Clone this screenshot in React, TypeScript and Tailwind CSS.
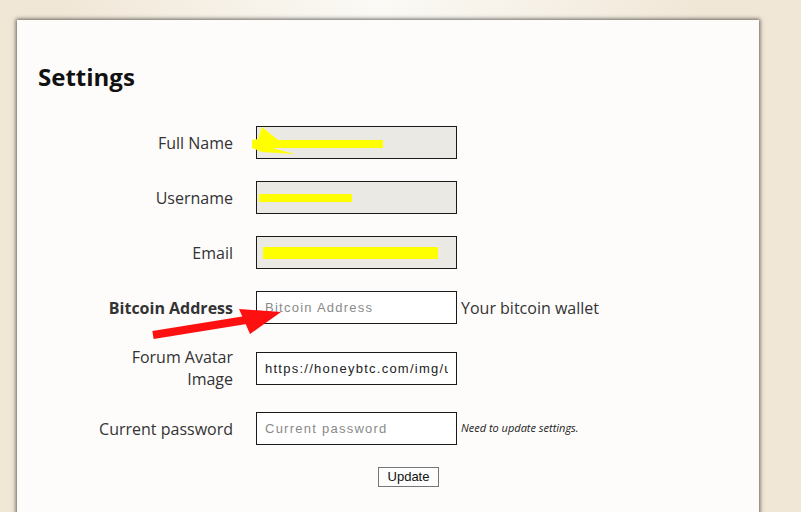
import React from "react";

const label = "text-right text-[16px] leading-[22px] text-[#333] [font-family:'Open_Sans',sans-serif]";
const field =
  "w-[201px] h-[33px] border border-[#1a1a1a] px-[8px] text-[13px] tracking-[1.25px] text-[#222] outline-none placeholder:text-[#8a8a8a] [font-family:'Liberation_Sans',Arial,sans-serif]";

export default function App() {
  return (
    <div className="relative w-[801px] h-[512px] overflow-hidden bg-[radial-gradient(ellipse_420px_260px_at_380px_0px,#fbfaf6,#f1e7d7_75%)] pt-[20px] pl-[17px]">
      <div className="w-[742px] min-h-[520px] bg-[#fdfcfb] shadow-[0_0_4px_1px_rgba(0,0,0,0.6)] pt-[41px]">
        <h1 className="pl-[21px] text-[24px] leading-[32px] font-bold text-[#111] [font-family:'Open_Sans',sans-serif]">
          Settings
        </h1>

        <form className="mt-[33px] grid grid-cols-[216px_201px_auto] gap-x-[23px] gap-y-[22px] items-center">
          <label className={label}>Full Name</label>
          <input className={field + " bg-[#eae9e3]"} disabled />
          <span />

          <label className={label}>Username</label>
          <input className={field + " bg-[#eae9e3]"} disabled />
          <span />

          <label className={label}>Email</label>
          <input className={field + " bg-[#eae9e3]"} disabled />
          <span />

          <label className={label + " font-bold text-[#111]"}>Bitcoin Address</label>
          <input className={field + " bg-white"} placeholder="Bitcoin Address" />
          <span className="-ml-[19px] text-[16px] leading-[22px] text-[#333] [font-family:'Open_Sans',sans-serif]">
            Your bitcoin wallet
          </span>

          <label className={label}>
            Forum Avatar
            <br />
            Image
          </label>
          <input className={field + " bg-white"} defaultValue="https://honeybtc.com/img/user.png" />
          <span />

          <label className={label}>Current password</label>
          <input className={field + " bg-white"} placeholder="Current password" type="password" />
          <span className="-ml-[19px] text-[11px] italic text-[#222] [font-family:'Open_Sans',sans-serif]">
            Need to update settings.
          </span>

          <span />
          <div className="flex">
            <button
              type="button"
              className="block ml-[122px] w-[61px] h-[20px] border border-[#767676] bg-[#fdfdfd] text-[13px] leading-[18px] text-[#111] [font-family:'Liberation_Sans',Arial,sans-serif]"
            >
              Update
            </button>
          </div>
          <span />
        </form>
      </div>

      {/* markup drawn over the screenshot */}
      <svg className="pointer-events-none absolute left-0 top-0" width="801" height="512">
        <polygon
          points="262,127 278,140 383,140 383,148 272,148 295,154 262,152 252,148 252,140 258,139"
          fill="#ffff00"
        />
        <rect x="259" y="194" width="93" height="8" fill="#ffff00" />
        <rect x="263" y="247" width="175" height="12" fill="#ffff00" />
        <line x1="153" y1="335" x2="246" y2="320" stroke="#ff1010" strokeWidth="8" />
        <polygon points="239,309 281,312 250,334" fill="#ff1010" />
      </svg>
    </div>
  );
}
